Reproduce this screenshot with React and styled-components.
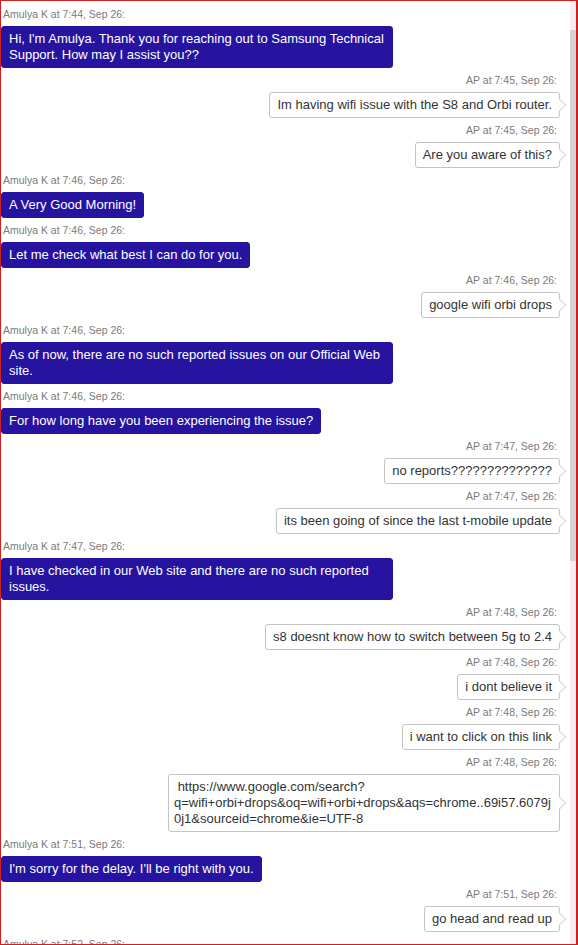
import React from 'react';
import styled, { createGlobalStyle } from 'styled-components';

const Global = createGlobalStyle`
  html, body {
    margin: 0;
    padding: 0;
    background: #fff;
  }
  body {
    font-family: "Liberation Sans", Arial, sans-serif;
  }
`;

const Frame = styled.div`
  box-sizing: border-box;
  width: 578px;
  height: 945px;
  border: 1px solid #d0201f;
  border-right-width: 2px;
  display: flex;
  overflow: hidden;
`;

const Log = styled.div`
  flex: 1;
  display: flex;
  flex-direction: column;
  padding: 6px 10px 0 0;
  overflow: hidden;
`;

const Track = styled.div`
  width: 6px;
  flex: none;
  background: #f4eeee;
  display: flex;
  flex-direction: column;
  padding-top: 29px;
`;

const Thumb = styled.div`
  height: 531px;
  background: #d3d3d3;
`;

const Entry = styled.div`
  display: flex;
  flex-direction: column;
  align-items: ${p => (p.$mine ? 'flex-end' : 'flex-start')};
  margin-bottom: 5px;
`;

const Label = styled.div`
  font-size: 10.5px;
  line-height: 14px;
  color: #7a7a7a;
  margin: 0 ${p => (p.$mine ? '3px' : '0')} 5px ${p => (p.$mine ? '0' : '2px')};
`;

const Bubble = styled.div`
  box-sizing: border-box;
  max-width: 392px;
  font-size: 13px;
  line-height: 16px;
  padding: 4px 7px;
  border-radius: 3px;
  white-space: pre-wrap;
`;

const AgentBubble = styled(Bubble)`
  background: #2613a0;
  color: #fff;
  border: 1px solid #2613a0;
`;

const MyBubble = styled(Bubble)`
  position: relative;
  background: #fff;
  color: #333;
  border: 1px solid #c4c4c4;
  word-break: break-all;
  padding-left: ${p => (p.$wide ? '5px' : '7px')};

  &::before,
  &::after {
    content: '';
    position: absolute;
    top: 50%;
    width: 0;
    height: 0;
    border-style: solid;
    border-color: transparent;
    transform: translateY(-50%);
  }
  &::before {
    right: -7px;
    border-width: 7px 0 7px 7px;
    border-left-color: #c4c4c4;
  }
  &::after {
    right: -6px;
    border-width: 6px 0 6px 6px;
    border-left-color: #fff;
  }
`;

const messages = [
  { who: 'Amulya K', at: '7:44', text: "Hi, I'm Amulya. Thank you for reaching out to Samsung Technical Support. How may I assist you??" },
  { who: 'AP', at: '7:45', text: 'Im having wifi issue with the S8 and Orbi router.' },
  { who: 'AP', at: '7:45', text: 'Are you aware of this?' },
  { who: 'Amulya K', at: '7:46', text: 'A Very Good Morning!' },
  { who: 'Amulya K', at: '7:46', text: 'Let me check what best I can do for you.' },
  { who: 'AP', at: '7:46', text: 'google wifi orbi drops' },
  { who: 'Amulya K', at: '7:46', text: 'As of now, there are no such reported issues on our Official Web site.' },
  { who: 'Amulya K', at: '7:46', text: 'For how long have you been experiencing the issue?' },
  { who: 'AP', at: '7:47', text: 'no reports??????????????' },
  { who: 'AP', at: '7:47', text: 'its been going of since the last t-mobile update' },
  { who: 'Amulya K', at: '7:47', text: 'I have checked in our Web site and there are no such reported issues.' },
  { who: 'AP', at: '7:48', text: 's8 doesnt know how to switch between 5g to 2.4' },
  { who: 'AP', at: '7:48', text: 'i dont believe it' },
  { who: 'AP', at: '7:48', text: 'i want to click on this link' },
  {
    who: 'AP',
    at: '7:48',
    wide: true,
    text: ' https://www.google.com/search?\nq=wifi+orbi+drops&oq=wifi+orbi+drops&aqs=chrome..69i57.6079j0j1&sourceid=chrome&ie=UTF-8',
  },
  { who: 'Amulya K', at: '7:51', text: "I'm sorry for the delay. I'll be right with you." },
  { who: 'AP', at: '7:51', text: 'go head and read up' },
  { who: 'Amulya K', at: '7:52', text: 'Are you still there?' },
];

const Message = ({ msg }) => {
  const mine = msg.who === 'AP';
  return (
    <Entry $mine={mine}>
      <Label $mine={mine}>{msg.who} at {msg.at}, Sep 26:</Label>
      {mine ? (
        <MyBubble $wide={msg.wide}>{msg.text}</MyBubble>
      ) : (
        <AgentBubble>{msg.text}</AgentBubble>
      )}
    </Entry>
  );
};

export default function App() {
  return (
    <>
      <Global />
      <Frame>
        <Log>
          {messages.map((m, i) => (
            <Message key={i} msg={m} />
          ))}
        </Log>
        <Track>
          <Thumb />
        </Track>
      </Frame>
    </>
  );
}
